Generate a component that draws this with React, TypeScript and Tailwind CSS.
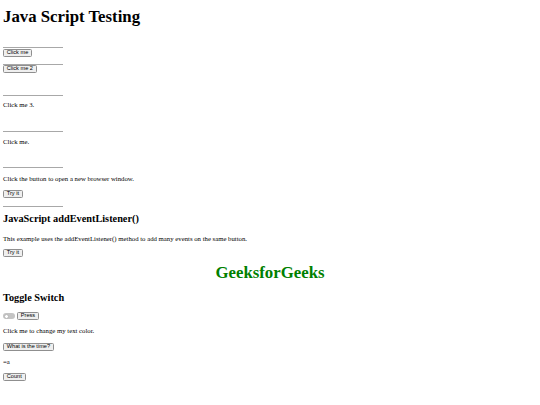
import React from 'react'

const serif = { fontFamily: '"Liberation Serif", "Times New Roman", serif' }

function Btn({ children }: { children: React.ReactNode }) {
  return (
    <button className="inline-flex h-[8px] items-center rounded-[1.5px] border border-[#8f8f8f] bg-[#efefef] px-[2.8px] font-['Liberation_Sans',Arial,sans-serif] text-[5.6px] leading-none text-black">
      {children}
    </button>
  )
}

function Rule({ className }: { className: string }) {
  return <div className={`ml-[3px] h-px w-[60px] bg-[#a8a8a8] ${className}`} />
}

export default function App() {
  return (
    <div className="h-[405px] w-[540px] overflow-hidden bg-white text-black" style={serif}>
      <h1 className="ml-[3px] mt-[8px] h-[18px] text-[16.8px] font-bold leading-[18px]">Java Script Testing</h1>

      <Rule className="mt-[21px]" />
      <div className="ml-[3px] mt-[1px] flex h-[8px]"><Btn>Click me</Btn></div>
      <Rule className="mt-[7px]" />
      <div className="ml-[3px] flex h-[8px]"><Btn>Click me 2</Btn></div>

      <Rule className="mt-[22px]" />
      <p className="ml-[3px] mt-[5px] h-[8px] text-[6.75px] leading-[8px]">Click me 3.</p>

      <Rule className="mt-[22px]" />
      <p className="ml-[3px] mt-[6px] h-[8px] text-[6.75px] leading-[8px]">Click me.</p>

      <Rule className="mt-[21px]" />
      <p className="ml-[3px] mt-[7px] h-[8px] text-[6.75px] leading-[8px]">Click the button to open a new browser window.</p>
      <div className="ml-[3px] mt-[7px] flex h-[8px]"><Btn>Try it</Btn></div>
      <Rule className="mt-[8px]" />

      <h2 className="ml-[3px] mt-[6px] h-[12px] text-[10.3px] font-bold leading-[12px]">JavaScript addEventListener()</h2>
      <p className="ml-[3px] mt-[10px] h-[8px] text-[6.75px] leading-[8px]">
        This example uses the addEventListener() method to add many events on the same button.
      </p>
      <div className="ml-[3px] mt-[6px] flex h-[8px]"><Btn>Try it</Btn></div>

      <h1 className="mt-[7px] h-[18px] text-center text-[16.8px] font-bold leading-[18px] text-[#008000]">GeeksforGeeks</h1>

      <h2 className="ml-[3px] mt-[10px] h-[12px] text-[10.3px] font-bold leading-[12px]">Toggle Switch</h2>
      <div className="ml-[3px] mt-[8px] flex h-[8px] items-center gap-[2px]">
        <span className="relative inline-block h-[6px] w-[12px] rounded-full bg-[#c4c4c4]">
          <span className="absolute left-[0.5px] top-[0.5px] h-[5px] w-[5px] rounded-full border-[0.5px] border-[#b8b8b8] bg-white" />
        </span>
        <Btn>Press</Btn>
      </div>
      <p className="ml-[3px] mt-[7px] h-[8px] text-[6.75px] leading-[8px]">Click me to change my text color.</p>
      <div className="ml-[3px] mt-[8px] flex h-[8px]"><Btn>What is the time?</Btn></div>
      <p className="ml-[3px] mt-[7px] h-[8px] text-[6.75px] leading-[8px]">=a</p>
      <div className="ml-[3px] mt-[7px] flex h-[8px]"><Btn>Count</Btn></div>
    </div>
  )
}
